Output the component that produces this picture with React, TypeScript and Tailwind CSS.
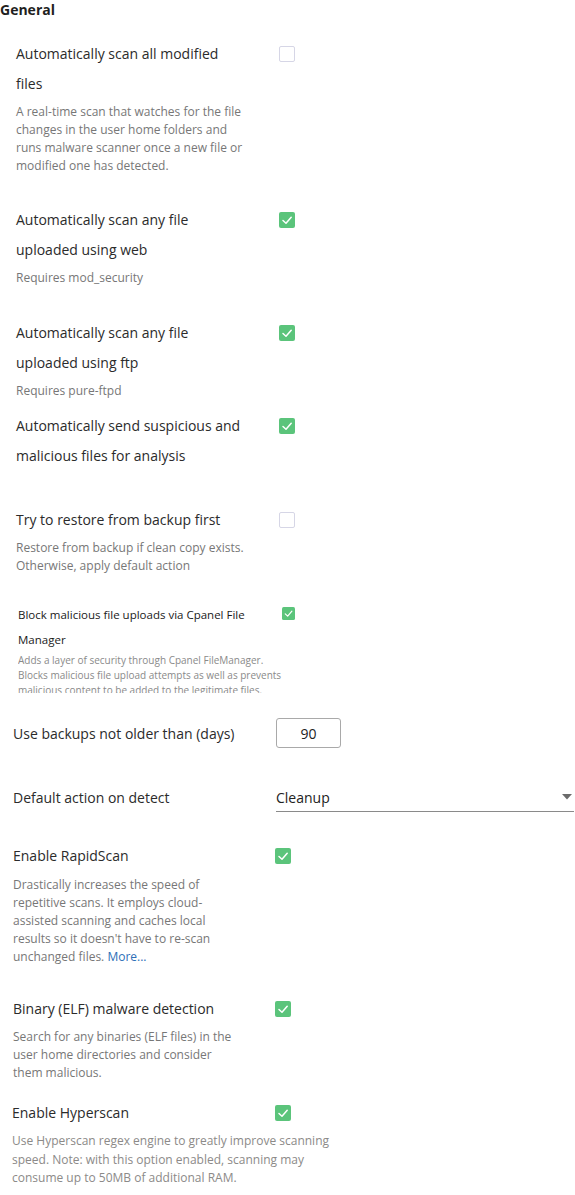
import type * as React from "react";
import clsx from "clsx";

function Check({ checked, small }: { checked: boolean; small?: boolean }): React.JSX.Element {
  const size = small ? 13 : 16;
  if (!checked) {
    return (
      <div
        className={clsx(
          "shrink-0 rounded-[2px] border border-[#d6d6e6] bg-white",
          small ? "h-[13px] w-[13px]" : "h-4 w-4"
        )}
      />
    );
  }
  return (
    <svg width={size} height={size} viewBox="0 0 16 16" className="shrink-0">
      <rect x="0" y="0" width="16" height="16" rx="2" fill="#5bc47b" />
      <polyline
        points="4,8.5 7,11.2 12.2,5.2"
        fill="none"
        stroke="#fff"
        strokeWidth="1.5"
        strokeLinecap="round"
        strokeLinejoin="round"
      />
    </svg>
  );
}

interface RowProps {
  label: string;
  desc?: React.ReactNode;
  checked: boolean;
  className?: string;
  labelWidth?: string;
  descWidth?: string;
  col?: string;
  descClass?: string;
}

function CheckRow({
  label,
  desc,
  checked,
  className,
  labelWidth = "w-[230px]",
  descWidth = "w-[230px]",
  col = "w-[263px]",
  descClass = "mt-1 leading-[18px] text-[#777]",
}: RowProps): React.JSX.Element {
  return (
    <div className={clsx("flex", className)}>
      <div className={clsx("shrink-0", col)}>
        <div className={clsx("text-[14px] leading-[30px] text-[#2b2b2b]", labelWidth)}>{label}</div>
        {desc ? <div className={clsx("text-[12px]", descWidth, descClass)}>{desc}</div> : null}
      </div>
      <div className="mt-[7px]">
        <Check checked={checked} />
      </div>
    </div>
  );
}

export default function App(): React.JSX.Element {
  return (
    <div className="w-[575px] bg-white font-['Open_Sans',sans-serif] text-[#2b2b2b] pb-2">
      <h2 className="text-[14px] font-bold leading-[20px] text-[#1f1f1f]">General</h2>

      <div className="pl-4">
        <CheckRow
          className="mt-[19px]"
          checked={false}
          label="Automatically scan all modified files"
          desc="A real-time scan that watches for the file changes in the user home folders and runs malware scanner once a new file or modified one has detected."
        />
        <CheckRow
          className="mt-[30px]"
          checked
          label="Automatically scan any file uploaded using web"
          desc="Requires mod_security"
        />
        <CheckRow
          className="mt-[31px]"
          checked
          label="Automatically scan any file uploaded using ftp"
          desc="Requires pure-ftpd"
        />
        <CheckRow
          className="mt-[11px]"
          checked
          label="Automatically send suspicious and malicious files for analysis"
        />
        <CheckRow
          className="mt-[34px]"
          checked={false}
          label="Try to restore from backup first"
          desc="Restore from backup if clean copy exists. Otherwise, apply default action"
        />

        {/* cPanel file manager block renders a bit smaller */}
        <div className="mt-[27px] flex pl-[2px]">
          <div className="w-[264px] shrink-0">
            <div className="w-[236px] text-[11.5px] leading-[25px] text-[#1a1a1a]">
              Block malicious file uploads via Cpanel File Manager
            </div>
            <div className="mt-[1px] h-[40px] w-[266px] overflow-hidden text-[10px] leading-[15px] text-[#8a8a8a]">
              Adds a layer of security through Cpanel FileManager. Blocks malicious file upload attempts as well as
              prevents malicious content to be added to the legitimate files.
            </div>
          </div>
          <div className="mt-[5px]">
            <Check checked small />
          </div>
        </div>
      </div>

      <div className="pl-[13px]">
        <div className="mt-[25px] flex h-[30px] items-center">
          <div className="w-[263px] shrink-0 text-[14px]">Use backups not older than (days)</div>
          <div className="flex h-[30px] w-[65px] items-center justify-center rounded-[3px] border border-[#a9a9a9] text-[14px] text-[#222]">
            90
          </div>
        </div>

        <div className="mt-[34px] flex items-center">
          <div className="w-[263px] shrink-0 text-[14px]">Default action on detect</div>
          <div className="flex h-[30px] w-[298px] items-center justify-between border-b border-[#8a8a8a] pt-[1px]">
            <span className="text-[14px] text-[#222]">Cleanup</span>
            <svg width="10" height="6" viewBox="0 0 10 6" className="mr-[2px]">
              <polygon points="0,0 10,0 5,5.5" fill="#6b6b6b" />
            </svg>
          </div>
        </div>

        <CheckRow
          className="mt-[29px]"
          col="w-[262px]"
          labelWidth="w-[240px]"
          descWidth="w-[222px]"
          descClass="mt-[5px] leading-[18px] text-[#777]"
          checked
          label="Enable RapidScan"
          desc={
            <>
              Drastically increases the speed of repetitive scans. It employs cloud-assisted scanning and caches local
              results so it doesn't have to re-scan unchanged files.{" "}
              <a className="text-[#2d6fb7]" href="#">
                More...
              </a>
            </>
          }
        />

        <CheckRow
          className="mt-[28px]"
          col="w-[262px]"
          labelWidth="w-[240px]"
          descWidth="w-[222px]"
          checked
          label="Binary (ELF) malware detection"
          desc="Search for any binaries (ELF files) in the user home directories and consider them malicious."
        />

        <div className="-ml-px">
          <CheckRow
            className="mt-4"
            col="w-[263px]"
            labelWidth="w-[240px]"
            descWidth="w-[330px]"
            descClass="mt-1 leading-[18.5px] text-[#8c8a88]"
            checked
            label="Enable Hyperscan"
            desc="Use Hyperscan regex engine to greatly improve scanning speed. Note: with this option enabled, scanning may consume up to 50MB of additional RAM."
          />
        </div>
      </div>
    </div>
  );
}
